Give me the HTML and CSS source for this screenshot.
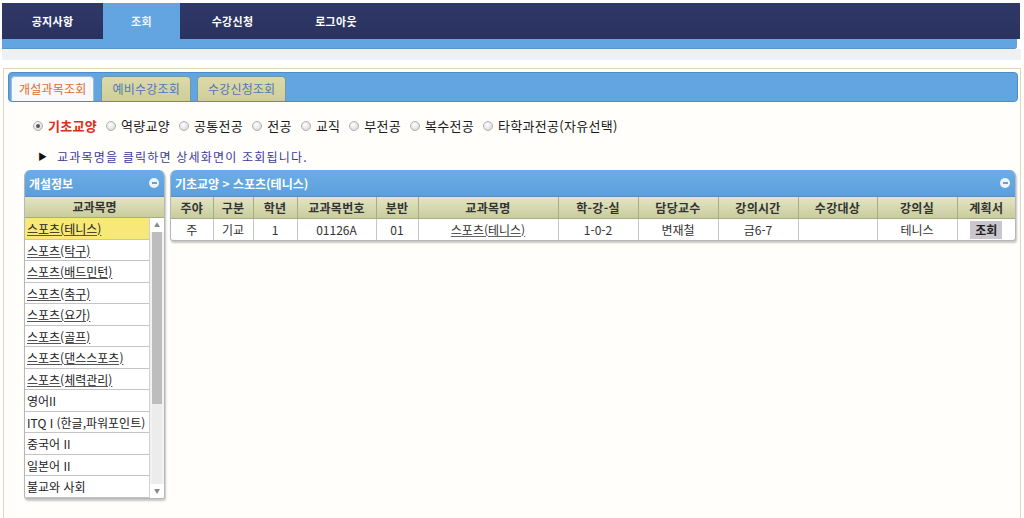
FILE: index.html
```html
<!DOCTYPE html>
<html lang="ko">
<head>
<meta charset="utf-8">
<title>개설과목조회</title>
<link rel="stylesheet" href="styles.css">
</head>
<body>
<div class="top">
  <div class="nav">
    <a class="nav-item w101">공지사항</a>
    <a class="nav-item w77 active">조회</a>
    <a class="nav-item w105">수강신청</a>
    <a class="nav-item w102">로그아웃</a>
  </div>
  <div class="nav-strip"></div>
</div>
<div class="subbar"></div>

<div class="page">
  <div class="tabs">
    <div class="tab active">개설과목조회</div>
    <div class="tab">예비수강조회</div>
    <div class="tab">수강신청조회</div>
  </div>

  <div class="radios">
    <label class="opt sel"><span class="radio on"></span>기초교양</label>
    <label class="opt"><span class="radio"></span>역량교양</label>
    <label class="opt"><span class="radio"></span>공통전공</label>
    <label class="opt"><span class="radio"></span>전공</label>
    <label class="opt"><span class="radio"></span>교직</label>
    <label class="opt"><span class="radio"></span>부전공</label>
    <label class="opt"><span class="radio"></span>복수전공</label>
    <label class="opt"><span class="radio"></span>타학과전공(자유선택)</label>
  </div>

  <div class="info"><span class="tri">▶</span><span class="info-text">교과목명을 클릭하면 상세화면이 조회됩니다.</span></div>

  <div class="panels">
    <div class="panel lpanel">
      <div class="phead"><span>개설정보</span><span class="collapse"></span></div>
      <div class="colhead">교과목명</div>
      <div class="list">
        <div class="items">
          <div class="item link current">스포츠(테니스)</div>
          <div class="item link">스포츠(탁구)</div>
          <div class="item link">스포츠(배드민턴)</div>
          <div class="item link">스포츠(축구)</div>
          <div class="item link">스포츠(요가)</div>
          <div class="item link">스포츠(골프)</div>
          <div class="item link">스포츠(댄스스포츠)</div>
          <div class="item link">스포츠(체력관리)</div>
          <div class="item">영어II</div>
          <div class="item">ITQ I (한글,파워포인트)</div>
          <div class="item">중국어 II</div>
          <div class="item">일본어 II</div>
          <div class="item">불교와 사회</div>
        </div>
        <div class="scroll">
          <div class="sb-btn">▲</div>
          <div class="sb-thumb"></div>
          <div class="sb-track"></div>
          <div class="sb-btn">▼</div>
        </div>
      </div>
    </div>

    <div class="panel rpanel">
      <div class="phead"><span>기초교양 &gt; 스포츠(테니스)</span><span class="collapse"></span></div>
      <table class="grid">
        <colgroup>
          <col class="c42"><col class="c40"><col class="c44"><col class="c79"><col class="c42"><col class="c140">
          <col class="c80"><col class="c80"><col class="c80"><col class="c79"><col class="c80"><col>
        </colgroup>
        <thead>
          <tr>
            <th>주야</th><th>구분</th><th>학년</th><th>교과목번호</th><th>분반</th><th>교과목명</th>
            <th>학-강-실</th><th>담당교수</th><th>강의시간</th><th>수강대상</th><th>강의실</th><th>계획서</th>
          </tr>
        </thead>
        <tbody>
          <tr>
            <td>주</td><td>기교</td><td>1</td><td>01126A</td><td>01</td><td class="link">스포츠(테니스)</td>
            <td>1-0-2</td><td>변재철</td><td>금6-7</td><td></td><td>테니스</td><td><span class="btn">조회</span></td>
          </tr>
        </tbody>
      </table>
    </div>
  </div>
</div>
</body>
</html>
```

FILE: styles.css
```css
html, body {
  margin: 0;
  padding: 0;
  background: #fff;
}
body {
  font-family: "Noto Sans CJK KR", "Noto Sans", "Liberation Sans", sans-serif;
  font-size: 12px;
  color: #222;
  overflow: hidden;
  height: 518px;
}

/* top navigation */
.top {
  margin: 3px 4px 0 2px;
}
.nav {
  display: flex;
  height: 36px;
  background: linear-gradient(#2f3866, #2a3260);
}
.nav-item {
  display: block;
  text-align: center;
  line-height: 36px;
  color: #fff;
  font-weight: bold;
  font-size: 11px;
  letter-spacing: 0.3px;
}
.w101 { width: 101px; }
.w77 { width: 77px; }
.w105 { width: 105px; }
.w102 { width: 102px; }
.nav-item.active {
  background: #63a5e0;
  color: #eef5fc;
}
.nav-strip {
  height: 9px;
  background: #63a5e0;
  margin-right: 3px;
  border-bottom-right-radius: 3px;
  border-bottom: 1px solid #5a94c9;
}
.subbar {
  height: 11px;
  background: #eef0f2;
  margin: 0 3px 0 2px;
}

/* main page box */
.page {
  margin: 8px 3px 0 3px;
  border: 1px solid #e2d5b9;
  border-bottom: none;
  padding: 3px 4px 0;
  background: #fffefa;
  height: 446px;
}

/* tabs */
.tabs {
  height: 30px;
  box-sizing: border-box;
  background: #63a5e0;
  border: 1px solid #4f8dca;
  border-radius: 4px;
  display: flex;
  align-items: flex-end;
  gap: 6px;
  padding-left: 2px;
  margin-right: -2px;
}
.tab {
  height: 25px;
  box-sizing: border-box;
  padding: 0 10px;
  line-height: 24px;
  font-size: 12px;
  letter-spacing: 0.2px;
  border: 1px solid #6d9aa6;
  border-bottom: none;
  border-radius: 4px 4px 0 0;
  background: linear-gradient(#dcdaa9, #cfcd98);
  color: #5277b7;
}
.tab.active {
  padding: 0 7px;
  background: #f6f8fa;
  border-color: #a3bcd5;
  color: #e06a2c;
  margin-right: 1px;
}

/* radio row */
.radios {
  display: flex;
  align-items: center;
  height: 18px;
  margin: 15px 0 0 25px;
}
.opt {
  display: flex;
  align-items: center;
  margin-right: 9px;
  font-size: 13px;
  letter-spacing: 0.3px;
  color: #1a1a1a;
  line-height: 18px;
}
.opt.sel {
  color: #e02b22;
  font-weight: bold;
  letter-spacing: 0.3px;
}
.radio {
  width: 10px;
  height: 10px;
  box-sizing: border-box;
  border-radius: 50%;
  border: 1px solid #b0b0b0;
  background: radial-gradient(circle at 40% 35%, #ffffff, #d0d0d0);
  margin-right: 5px;
  display: flex;
  align-items: center;
  justify-content: center;
}
.radio.on::after {
  content: "";
  width: 4px;
  height: 4px;
  border-radius: 50%;
  background: #555;
}

/* info line */
.info {
  margin-top: 14px;
  padding-left: 30px;
  height: 16px;
  line-height: 16px;
  display: flex;
  align-items: center;
}
.tri {
  font-size: 9px;
  color: #111;
  width: 19px;
}
.info-text {
  color: #3a3a9c;
  font-size: 12px;
  letter-spacing: 1.2px;
}

/* panels */
.panels {
  display: flex;
  align-items: flex-start;
  gap: 5px;
  margin: 5px 0 0 16px;
}
.panel {
  background: #fff;
  border: 1px solid #b4b8bc;
  border-top: none;
  border-radius: 6px 6px 3px 3px;
  box-shadow: 1px 2px 2px rgba(0, 0, 0, 0.22);
  overflow: hidden;
}
.lpanel {
  width: 141px;
  box-sizing: border-box;
}
.rpanel {
  flex: 1;
}
.phead {
  height: 26px;
  background: linear-gradient(#6badE6, #5d9fdc);
  color: #fff;
  font-weight: bold;
  font-size: 12px;
  display: flex;
  align-items: center;
  justify-content: space-between;
  padding: 0 5px 0 4px;
  border-bottom: 1px solid #5a8fb8;
}
.collapse {
  width: 10px;
  height: 10px;
  border-radius: 50%;
  background: #eef3f8;
  display: flex;
  align-items: center;
  justify-content: center;
}
.collapse::after {
  content: "";
  width: 5px;
  height: 2px;
  background: #6a9fd0;
}

.colhead {
  height: 20px;
  line-height: 20px;
  text-align: center;
  font-weight: bold;
  font-size: 12px;
  color: #333;
  background: linear-gradient(#e3e5c3, #c9cc9c);
  border-bottom: 1px solid #a8ab86;
}

/* list */
.list {
  display: flex;
  height: 280px;
}
.items {
  flex: 1;
  min-width: 0;
  border-right: 1px solid #d0d0d0;
}
.item {
  height: 21.5px;
  box-sizing: border-box;
  line-height: 21px;
  border-bottom: 1px solid #c4c4c4;
  padding-left: 2px;
  font-size: 12px;
  color: #222;
  white-space: nowrap;
  overflow: hidden;
}
.item.link {
  text-decoration: underline;
  text-decoration-color: #555;
}
.item.current {
  background: #f8e877;
}
.scroll {
  width: 14px;
  display: flex;
  flex-direction: column;
  background: #f2f2f2;
}
.sb-btn {
  height: 14px;
  font-size: 6px;
  color: #888;
  text-align: center;
  line-height: 14px;
  background: #fff;
}
.sb-thumb {
  height: 172px;
  margin: 0 2px;
  background: #bdbdbd;
}
.sb-track {
  flex: 1;
  background: #ececec;
  margin: 0 2px;
}

/* grid table */
.grid {
  width: 100%;
  border-collapse: collapse;
  table-layout: fixed;
  font-size: 12px;
}
.c40 { width: 40px; }
.c42 { width: 42px; }
.c44 { width: 44px; }
.c79 { width: 79px; }
.c80 { width: 80px; }
.c140 { width: 140px; }
.grid th {
  height: 21px;
  padding: 0;
  font-weight: bold;
  color: #333;
  letter-spacing: 0.3px;
  background: linear-gradient(#e3e5c3, #c9cc9c);
  border: 1px solid #a9ac88;
  border-top: none;
}
.grid td {
  height: 21px;
  padding: 0;
  text-align: center;
  color: #333;
  border: 1px solid #c6c6c6;
  border-bottom: none;
}
.grid th:first-child, .grid td:first-child { border-left: none; }
.grid th:last-child, .grid td:last-child { border-right: none; }
.grid td.link {
  text-decoration: underline;
  text-decoration-color: #666;
}
.btn {
  display: inline-block;
  background: #c9c6cd;
  padding: 0 5px;
  line-height: 18px;
  font-weight: bold;
  color: #222;
}
```
